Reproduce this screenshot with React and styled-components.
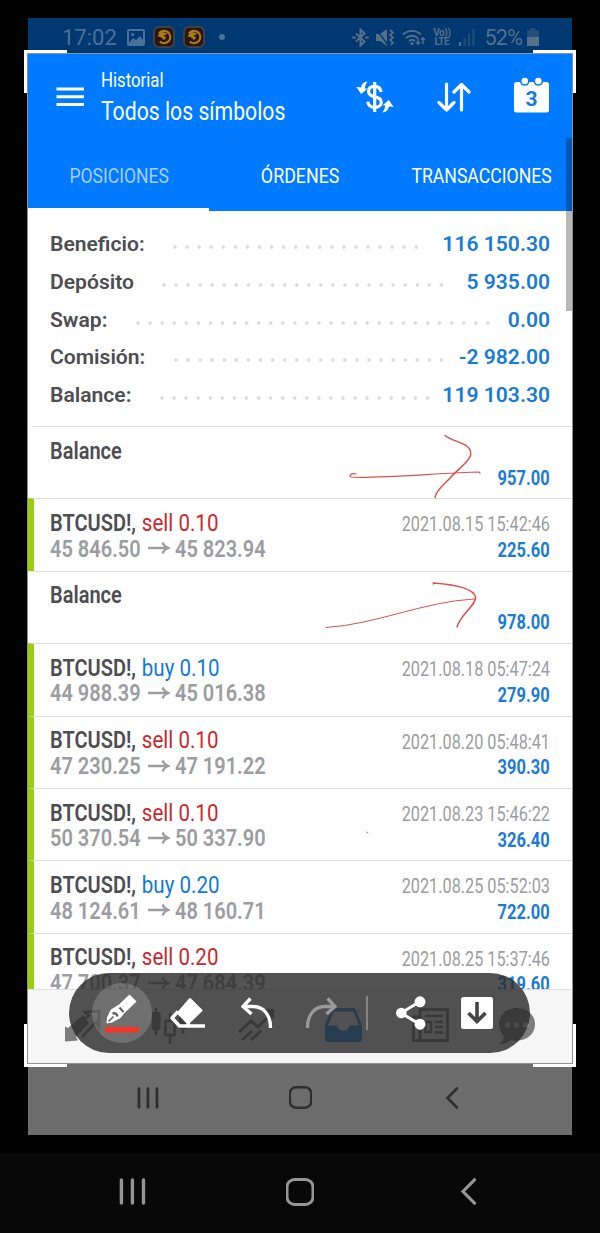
import React from 'react';
import styled, { createGlobalStyle } from 'styled-components';

const GlobalStyle = createGlobalStyle`
  * {
    box-sizing: border-box;
  }
  body {
    margin: 0;
    background: #020202;
    font-family: Roboto, "Liberation Sans", sans-serif;
  }
`;

const Phone = styled.div`
  width: 600px;
  height: 1233px;
  display: flex;
  flex-direction: column;
  overflow: hidden;
  background: #020202;
`;

const Shot = styled.div`
  position: relative;  /* anchors the crop frame, the ink and the toolbar */
  width: 544px;
  height: 1117px;
  margin: 18px 0 0 28px;
  display: flex;
  flex-direction: column;
`;

/* Narrow Roboto: regular glyphs squeezed horizontally from one edge */
const Narrow = styled.span`
  display: inline-block;
  white-space: nowrap;
  transform: scaleX(${(p) => p.$x || 0.87});
  transform-origin: ${(p) => p.$from || 'left'} center;
`;

const StatusBar = styled.div`
  flex: none;
  height: 36px;
  padding: 2px 33px 0 34px;
  display: flex;
  align-items: center;
  justify-content: space-between;
  background: #003872;
  color: #4c7098;
  font-size: 22px;
`;

const StatusGroup = styled.div`
  display: flex;
  align-items: center;
  gap: ${(p) => p.$gap}px;
  color: ${(p) => p.$color || 'inherit'};
`;

const Clock = styled.span`
  margin-right: 2px;
`;

const Percent = styled.span`
  font-size: 21.5px;
  letter-spacing: -0.6px;
  margin: 0 -2px 0 3px;
`;

const VoLte = styled.div`
  width: 19px;
  font-size: 10px;
  line-height: 9px;
  font-weight: 700;
  text-align: center;
  letter-spacing: -0.4px;
`;

const Header = styled.header`
  flex: none;
  height: 84px;
  display: flex;
  align-items: center;
  padding: 2px 23px 0 28px;
  background: #007aff;
  color: #fff;
  border-bottom: 1px solid #0071ee;
`;

const Titles = styled.div`
  flex: 1;
  display: flex;
  flex-direction: column;
  margin: 2px 0 0 17px;
`;

const Caption = styled.div`
  font-size: 19.5px;
  line-height: 29px;
`;

const Title = styled.div`
  font-size: 25px;
  line-height: 34px;
`;

const HeaderIcons = styled.div`
  display: flex;
  align-items: center;
  gap: 43px;
`;

const Tabs = styled.nav`
  flex: none;
  height: 73px;
  display: flex;
  background: #007aff;
`;

const Tab = styled.div`
  width: 181.3px;
  display: flex;
  align-items: center;
  justify-content: center;
  padding-top: 5px;
  font-size: 20.5px;
  color: ${(p) => (p.$active ? '#a9cdf5' : '#fff')};
  border-bottom: 3px solid ${(p) => (p.$active ? '#fff' : 'transparent')};
`;

const Summary = styled.section`
  flex: none;
  height: 215px;
  padding: 14px 22px 0 22px;
  background: #fff;
`;

const SummaryRow = styled.div`
  height: 37.7px;
  display: flex;
  align-items: center;
  font-size: 21.1px;
  font-weight: 600;
  color: #4d4e52;
`;

const Leader = styled.div`
  width: ${(p) => p.$dots * 12.07}px;
  height: 4px;
  margin: 7px 0 0 24.5px;
  background: radial-gradient(circle, #dcdcdc 1.5px, transparent 2.1px) left center / 12.07px 4px repeat-x;
`;

const SummaryValue = styled.div`
  margin-left: auto;
  color: #1a7bd6;
`;

const Deals = styled.section`
  height: 562.5px;
  flex: none;
  overflow: hidden;
  background: #fff;
`;

const DealRow = styled.div`
  height: 72.4px;
  display: flex;
  justify-content: space-between;
  padding: 11.6px 22px 0 16px;
  border-top: 1.5px solid #dfdfdf;
  border-left: 6px solid ${(p) => (p.$profit ? '#9ace0c' : '#fff')};
`;

const DealLeft = styled.div`
  font-size: 23px;
  line-height: 25.6px;
  font-weight: 600;
  color: #4d4e52;
`;

const DealTitle = styled.div`
  height: 25.6px;
`;

const Side = styled.span`
  margin-left: 1px;
  font-size: 23.6px;
  font-weight: 400;
  color: ${(p) => (p.$side === 'buy' ? '#0f7adb' : '#c9282d')};
`;

const Prices = styled.div`
  display: flex;
  align-items: center;
  color: #9c9da0;
`;

const Price = styled.div`
  width: 98px;
`;

const DealRight = styled.div`
  padding-top: 1.5px;
  text-align: right;
  font-size: 19.5px;
  line-height: 25.6px;
`;

const DealDate = styled.div`
  height: 25.6px;
  color: #9c9da0;
`;

const DealProfit = styled.div`
  font-weight: 700;
  color: #1a7bd6;
`;

const BottomBar = styled.footer`
  flex: none;
  height: 75px;
  display: flex;
  padding: 18px 12px 0;
  background: #f6f6f6;
  border-top: 1px solid #e0e0e0;
  color: #7c7c7c;
`;

const BottomItem = styled.div`
  flex: 1;
  display: flex;
  justify-content: center;
  align-items: flex-start;
`;

const NavBar = styled.div`
  flex: none;
  height: ${(p) => p.$height}px;
  padding-bottom: 3px;
  display: flex;
  justify-content: center;
  align-items: center;
  background: ${(p) => p.$bg};
  color: ${(p) => p.$color};
  margin-top: ${(p) => p.$gap || 0}px;
`;

const NavItem = styled.div`
  width: ${(p) => p.$width}px;
  display: flex;
  justify-content: center;
`;

const ScrollThumb = styled.div`
  position: absolute;
  top: 120px;
  right: 0;
  width: 6px;
  height: 173px;
  background: rgba(0, 0, 0, 0.28);
`;

const CropBorder = styled.div`
  position: absolute;
  top: 35px;
  left: -1px;
  width: 546px;
  height: 1011px;
  border: 1px solid #8f9296;
`;

const Corner = styled.div`
  position: absolute;
  width: 43px;
  height: 43px;
  border: 0 solid #fff;
  ${(p) => (p.$v === 'top' ? 'top: 32px; border-top-width: 3px;' : 'top: 1006px; border-bottom-width: 3px;')}
  ${(p) => (p.$h === 'left' ? 'left: -4px; border-left-width: 3px;' : 'right: -4px; border-right-width: 3px;')}
`;

const Ink = styled.svg`
  position: absolute;
  left: 272px;
  top: 402px;
`;

const Toolbar = styled.div`
  position: absolute;
  left: 41px;
  top: 955px;
  width: 461px;
  height: 80px;
  padding-left: 23px;
  display: flex;
  align-items: center;
  border-radius: 40px;
  background: rgba(40, 40, 40, 0.8);
  color: #fff;
`;

const Tool = styled.div`
  width: 60px;
  height: 60px;
  margin-left: ${(p) => p.$gap || 0}px;
  display: flex;
  align-items: center;
  justify-content: center;
  border-radius: 50%;
  background: ${(p) => (p.$active ? 'rgba(255, 255, 255, 0.18)' : 'transparent')};
  color: ${(p) => (p.$disabled ? '#9a9a9a' : '#fff')};
`;

const Divider = styled.div`
  width: 2px;
  height: 34px;
  margin-left: 15px;
  background: #858585;
`;

const summary = [
  { label: 'Beneficio:', value: '116 150.30', dots: 21 },
  { label: 'Depósito', value: '5 935.00', dots: 24 },
  { label: 'Swap:', value: '0.00', dots: 30 },
  { label: 'Comisión:', value: '-2 982.00', dots: 23 },
  { label: 'Balance:', value: '119 103.30', dots: 23 },
];

const deals = [
  { profit: '957.00' },
  { side: 'sell', lot: '0.10', open: '45 846.50', close: '45 823.94', date: '2021.08.15 15:42:46', profit: '225.60' },
  { profit: '978.00' },
  { side: 'buy', lot: '0.10', open: '44 988.39', close: '45 016.38', date: '2021.08.18 05:47:24', profit: '279.90' },
  { side: 'sell', lot: '0.10', open: '47 230.25', close: '47 191.22', date: '2021.08.20 05:48:41', profit: '390.30' },
  { side: 'sell', lot: '0.10', open: '50 370.54', close: '50 337.90', date: '2021.08.23 15:46:22', profit: '326.40' },
  { side: 'buy', lot: '0.20', open: '48 124.61', close: '48 160.71', date: '2021.08.25 05:52:03', profit: '722.00' },
  { side: 'sell', lot: '0.20', open: '47 700.37', close: '47 684.39', date: '2021.08.25 15:37:46', profit: '319.60' },
];

const PictureIcon = () => (
  <svg width="18" height="17" viewBox="0 0 18 17" fill="none" stroke="currentColor" strokeWidth="2">
    <rect x="1" y="1" width="16" height="15" rx="1" />
    <path d="M2 14l4-5 3 2 4-4 4 5v3H2z" fill="currentColor" stroke="none" />
    <circle cx="5.5" cy="5.5" r="1.6" fill="currentColor" stroke="none" />
  </svg>
);

const CoinIcon = () => (
  <svg width="22" height="22" viewBox="0 0 22 22" fill="none">
    <rect x="1" y="1" width="20" height="20" rx="5" fill="#2b1414" stroke="#4d4a42" strokeWidth="1.5" />
    <path d="M6 7.500a6.200 6.200 0 1 1 .8 8" stroke="#a87c18" strokeWidth="2.200" />
    <path d="M4.500 10.500c2-5 6-5.500 10-2.500-1 1-3 0-4 2 3 0 3 3 0 4-1-2-3-3.500-6-3.500z" fill="#a87c18" />
  </svg>
);

const BluetoothIcon = () => (
  <svg width="17" height="19" viewBox="0 0 17 19" fill="none" stroke="currentColor" strokeWidth="2">
    <path d="M4 5.5l8.500 8-4 4v-16l4 4-8.500 8" />
    <path d="M1 9.500h2M14 9.500h2" strokeLinecap="round" />
  </svg>
);

const MuteIcon = () => (
  <svg width="20" height="19" viewBox="0 0 20 19" fill="none" stroke="currentColor" strokeWidth="2">
    <path d="M1 6h4l7-5v17l-7-5H1z" fill="currentColor" stroke="none" />
    <path d="M1 1l12 16" stroke="#003872" strokeWidth="1.4" />
    <path d="M15 2l3 2.500-3 2.500 3 2.500-3 2.500 3 2.500-2 2.500" strokeWidth="1.7" />
  </svg>
);

const WifiIcon = () => (
  <svg width="24" height="18" viewBox="0 0 24 18" fill="none" stroke="currentColor" strokeWidth="1.9">
    <path d="M1 6.500a13 13 0 0 1 18 0M4 10a9 9 0 0 1 12 0M7 13a5 5 0 0 1 6 0" />
    <circle cx="10" cy="15.500" r="1.600" fill="currentColor" stroke="none" />
    <path d="M16 10v6m-2-2l2 2.200 2-2.200M21 16v-6m-2 2l2-2.200 2 2.200" strokeWidth="1.400" />
  </svg>
);

const SignalIcon = () => (
  <svg width="17" height="18" viewBox="0 0 17 18" stroke="currentColor" strokeWidth="2.200">
    <path d="M2 18v-4" />
    <path d="M6.500 18v-8M11 18V6M15.500 18V1" opacity="0.4" />
  </svg>
);

const BatteryIcon = () => (
  <svg width="12" height="18" viewBox="0 0 12 18" fill="currentColor">
    <path d="M3.500 0h5v2H12v7H0V2h3.500z" opacity="0.4" />
    <path d="M0 9h12v9H0z" />
  </svg>
);

const MenuIcon = () => (
  <svg width="28" height="20" viewBox="0 0 28 20" stroke="#fff" strokeWidth="3">
    <path d="M0.500 2h27.500M0.500 9.800h27.500M0.500 17.500h27.500" />
  </svg>
);

const CurrencyIcon = () => (
  <svg width="38" height="34" viewBox="0 0 38 34" fill="none" stroke="#fff" strokeWidth="3.200">
    <path d="M18.700 2v30" />
    <path d="M25 12c-.5-4-3-5.600-6.300-5.600-4 0-6.200 1.800-6.200 5 0 7.500 12.800 3.200 12.800 10.800 0 3.400-2.800 5.200-6.600 5.200-3.800 0-6.300-1.800-7-5.600" />
    <path d="M11.500 1.500c-4 .8-6 2.500-6.300 6L.3 7l4.900 7 6-5.200-2.400-.3c.2-2.500 1-4.500 2.700-7z" fill="#fff" stroke="none" />
    <path d="M26.500 32.500c4-.8 6-2.500 6.300-6l4.900.5-4.900-7-6 5.200 2.400.3c-.2 2.500-1 4.500-2.700 7z" fill="#fff" stroke="none" />
  </svg>
);

const SortIcon = () => (
  <svg width="34" height="30" viewBox="0 0 34 30" fill="none" stroke="#fff" strokeWidth="3.200" strokeLinecap="round" strokeLinejoin="round">
    <path d="M9.500 2v26M2 20.500l7.500 7.500 7.500-7.500" />
    <path d="M24.500 28V2.500M17 10l7.500-7.500L32 10" />
  </svg>
);

const CalendarBox = styled.div`
  position: relative;
  width: 35px;
  height: 36px;
  margin-bottom: 3px;
`;

const CalendarDay = styled.div`
  position: absolute;  /* number printed over the calendar sheet */
  left: 0;
  right: 0;
  top: 11px;
  text-align: center;
  color: #0f78e8;
  font-size: 21px;
  line-height: 22px;
  font-weight: 700;
`;

const CalendarIcon = () => (
  <CalendarBox>
    <svg width="35" height="36" viewBox="0 0 35 36">
      <rect x="0" y="5" width="35" height="30.500" rx="2.500" fill="#fff" />
      <circle cx="10.800" cy="4" r="4.800" fill="#007aff" />
      <circle cx="24.300" cy="4" r="4.800" fill="#007aff" />
      <circle cx="10.800" cy="4" r="3.200" fill="#fff" />
      <circle cx="24.300" cy="4" r="3.200" fill="#fff" />
    </svg>
    <CalendarDay>3</CalendarDay>
  </CalendarBox>
);

const ArrowIcon = () => (
  <svg width="22" height="14" viewBox="0 0 22 14" fill="none" stroke="#9c9da0" strokeWidth="2.300">
    <path d="M0 6h20.500M14.500 0.500q1.500 4 6 5.500-4.500 1.500-6 5.500" />
  </svg>
);

const QuotesIcon = () => (
  <svg width="36" height="34" viewBox="0 0 36 34" fill="none" stroke="currentColor" strokeWidth="2.500">
    <path d="M0 18.500l3 1.500 15-13 6 8-13 14 2 3.500-13 1z" fill="currentColor" stroke="none" />
    <path d="M17 29L31 14l3 5V3L20 4l4 3.500-6 5" />
  </svg>
);

const ChartIcon = () => (
  <svg width="36" height="38" viewBox="0 0 36 38" fill="none" stroke="currentColor" strokeWidth="2.600">
    <path d="M4 0v27M18 5v7M18 28v8M31 4v22" />
    <rect x="0" y="4" width="8.500" height="18" rx="1" fill="currentColor" stroke="none" />
    <rect x="13.500" y="13" width="9" height="14" />
    <rect x="27" y="9" width="8" height="12" fill="currentColor" stroke="none" />
  </svg>
);

const TradeIcon = () => (
  <svg width="37" height="34" viewBox="0 0 37 34" fill="none" stroke="currentColor" strokeWidth="3">
    <path d="M1 24l12-11 7 6L33 6" />
    <path d="M24 1h12v11z" fill="currentColor" stroke="none" />
    <path d="M4 32l10-9M13 32l10-9" />
  </svg>
);

const InboxIcon = () => (
  <svg width="37" height="34" viewBox="0 0 37 34" fill="#2a8cf0">
    <path d="M7 0h23l7 17v14a3 3 0 0 1-3 3H3a3 3 0 0 1-3-3V17z" />
    <path d="M8.500 3.500h20L34 17.500h-9.500c-1 7-11.500 7-12.500 0H3z" fill="#f6f6f6" />
  </svg>
);

const NewsIcon = () => (
  <svg width="37" height="34" viewBox="0 0 37 34" fill="none" stroke="currentColor" strokeWidth="3">
    <path d="M8 1.500h27.500v31H1.500V9H8z" />
    <path d="M8 9v23" />
    <path d="M13 8h18M23 14h8M23 19h8M23 24.500h8" strokeWidth="2.400" />
    <rect x="13.500" y="14" width="5.500" height="10" strokeWidth="2.600" />
  </svg>
);

const ChatIcon = () => (
  <svg width="37" height="37" viewBox="0 0 37 37">
    <path d="M18.500 0C8 0 1 7 1 16c0 5 2 9 5 12 0 3-2 6-5 8 5 0 9-1 12-4 14 3 24-5 24-16C37 7 29 0 18.500 0z" fill="currentColor" />
    <circle cx="9.500" cy="17" r="2.800" fill="#ddd" />
    <circle cx="18.500" cy="17" r="2.800" fill="#ddd" />
    <circle cx="27.500" cy="17" r="2.800" fill="#ddd" />
  </svg>
);

const PenIcon = () => (
  <svg width="36" height="40" viewBox="0 0 36 40">
    <path d="M25.500 2l6.500 6.500L19 21l-6-7z" fill="#fff" stroke="#fff" strokeLinejoin="round" />
    <path d="M15 12l6 6.500-4.500 6L8 29l-5 1 .5-5.500L7 17z" fill="#fff" stroke="#fff" strokeLinejoin="round" />
    <path d="M4.500 28.500l5-5" stroke="#666" strokeWidth="1.600" />
    <path d="M8.500 20.500q4-1 5 3" stroke="#666" strokeWidth="2.400" fill="none" />
    <path d="M15.500 14.500l4 4.500" stroke="#666" strokeWidth="2.200" />
    <rect x="1" y="34" width="34" height="5.500" rx="0.500" fill="#f23525" />
  </svg>
);

const EraserIcon = () => (
  <svg width="36" height="32" viewBox="0 0 36 32" fill="none" stroke="#fff" strokeLinejoin="round">
    <path d="M20 2l11.500 11.500L18 26.500 8 16z" fill="#fff" strokeWidth="2" />
    <path d="M8 14.500l-6 6.500 7.500 8h7l3-3M9.500 29H35" strokeWidth="3.400" />
  </svg>
);

const UndoIcon = () => (
  <svg width="32" height="32" viewBox="0 0 32 32" fill="none" stroke="currentColor" strokeWidth="3.400">
    <path d="M9.500 1.500l-7.500 8 8.500 7.500" />
    <path d="M3 9.500h9C22 9.500 29.500 17 29.500 31" />
  </svg>
);

const RedoIcon = () => (
  <svg width="32" height="32" viewBox="0 0 32 32" fill="none" stroke="currentColor" strokeWidth="3.400">
    <path d="M22.500 1.500l7.500 8-8.500 7.500" />
    <path d="M29 9.500h-9C10 9.500 2.500 17 2.500 31" />
  </svg>
);

const ShareIcon = () => (
  <svg width="30" height="34" viewBox="0 0 30 34" fill="currentColor" stroke="currentColor">
    <path d="M5 17L24 5.500M5 17l19 11.500" strokeWidth="3" />
    <circle cx="5.300" cy="17" r="5.300" stroke="none" />
    <circle cx="24" cy="5.800" r="5.500" stroke="none" />
    <circle cx="24" cy="28.200" r="5.500" stroke="none" />
  </svg>
);

const SaveIcon = () => (
  <svg width="32" height="32" viewBox="0 0 32 32" fill="none">
    <rect width="32" height="32" rx="2.500" fill="#fff" />
    <path d="M16 5v19M7.500 16l8.500 8.500 8.500-8.500" stroke="#444" strokeWidth="3.600" />
  </svg>
);

const RecentsIcon = ({ size }) => (
  <svg width={size} height={size} viewBox="0 0 27 27" stroke="currentColor" strokeWidth="3.400" strokeLinecap="round">
    <path d="M2.400 2v23M13.400 2v23M24.500 2v23" />
  </svg>
);

const HomeIcon = ({ size }) => (
  <svg width={size} height={size} viewBox="0 0 28 28" fill="none" stroke="currentColor" strokeWidth="3">
    <rect x="1" y="1.600" width="26" height="24.800" rx="7.500" />
  </svg>
);

const BackIcon = ({ size }) => (
  <svg width={size} height={size} viewBox="0 0 27 27" fill="none" stroke="currentColor" strokeWidth="3.200" strokeLinecap="round">
    <path d="M19.500 1.800L8 13.500l11.500 11.700" />
  </svg>
);

const Navigation = ({ item, size, ...bar }) => (
  <NavBar {...bar}>
    <NavItem $width={item}><RecentsIcon size={size} /></NavItem>
    <NavItem $width={item}><HomeIcon size={size + 1} /></NavItem>
    <NavItem $width={item}><BackIcon size={size} /></NavItem>
  </NavBar>
);

const Deal = ({ side, lot, open, close, date, profit }) => (
  <DealRow $profit={Boolean(side)}>
    <DealLeft>
      <DealTitle>
        <Narrow>
          {side ? <>BTCUSD!, <Side $side={side}>{side} {lot}</Side></> : 'Balance'}
        </Narrow>
      </DealTitle>
      {side && (
        <Prices>
          <Price><Narrow>{open}</Narrow></Price>
          <ArrowIcon />
          <Price><Narrow>&nbsp;{close}</Narrow></Price>
        </Prices>
      )}
    </DealLeft>
    <DealRight>
      <DealDate>{date && <Narrow $from="right" $x={0.833}>{date}</Narrow>}</DealDate>
      <DealProfit><Narrow $from="right" $x={0.845}>{profit}</Narrow></DealProfit>
    </DealRight>
  </DealRow>
);

const App = () => (
  <>
    <GlobalStyle />
    <Phone>
      <Shot>
        <StatusBar>
          <StatusGroup $gap={8}>
            <Clock>17:02</Clock>
            <PictureIcon />
            <CoinIcon />
            <CoinIcon />
            <svg width="16" height="8" viewBox="0 0 16 8"><circle cx="9" cy="4" r="3" fill="currentColor" /></svg>
          </StatusGroup>
          <StatusGroup $gap={6.5} $color="#567089">
            <BluetoothIcon />
            <MuteIcon />
            <WifiIcon />
            <VoLte>Vo)) LTE</VoLte>
            <SignalIcon />
            <Percent>52%</Percent>
            <BatteryIcon />
          </StatusGroup>
        </StatusBar>

        <Header>
          <MenuIcon />
          <Titles>
            <Caption><Narrow $x={0.86}>Historial</Narrow></Caption>
            <Title><Narrow $x={0.848}>Todos los símbolos</Narrow></Title>
          </Titles>
          <HeaderIcons>
            <CurrencyIcon />
            <SortIcon />
            <CalendarIcon />
          </HeaderIcons>
        </Header>

        <Tabs>
          <Tab $active><Narrow $from="center" $x={0.855}>POSICIONES</Narrow></Tab>
          <Tab><Narrow $from="center">ÓRDENES</Narrow></Tab>
          <Tab><Narrow $from="center" $x={0.86}>TRANSACCIONES</Narrow></Tab>
        </Tabs>

        <Summary>
          {summary.map((row) => (
            <SummaryRow key={row.label}>
              {row.label}
              <Leader $dots={row.dots} />
              <SummaryValue>{row.value}</SummaryValue>
            </SummaryRow>
          ))}
        </Summary>

        <Deals>
          {deals.map((deal) => <Deal key={deal.profit} {...deal} />)}
        </Deals>

        <BottomBar>
          <BottomItem><QuotesIcon /></BottomItem>
          <BottomItem><ChartIcon /></BottomItem>
          <BottomItem><TradeIcon /></BottomItem>
          <BottomItem><InboxIcon /></BottomItem>
          <BottomItem><NewsIcon /></BottomItem>
          <BottomItem><ChatIcon /></BottomItem>
        </BottomBar>

        <Navigation item={152} size={22} $height={71} $bg="#6c6c6c" $color="#2e2e2e" />

        <ScrollThumb />
        <CropBorder />
        <Corner $v="top" $h="left" />
        <Corner $v="top" $h="right" />
        <Corner $v="bottom" $h="left" />
        <Corner $v="bottom" $h="right" />

        {/* hand-drawn marks */}
        <Ink width="200" height="430" viewBox="300 420 200 430" fill="none" stroke="#d9534b" strokeLinecap="round">
          <path d="M356 474c-4-1-8 1-5 3 20 2 90-4 128-5l1 1" strokeWidth="1.200" />
          <path d="M445 435.500c8 7 28 7 25.500 20-3 8-12 13-20 22-7 8-14 12-15.500 20" strokeWidth="1.500" />
          <path d="M326 627.500c50-3 98-26 148-28.500" strokeWidth="1" />
          <path d="M433.500 584v-1c13 1 40 4 42 14 1 8-15 17-18.500 30" strokeWidth="1.500" />
          <path d="M366.500 832l1.500 1" stroke="#888" />
        </Ink>

        <Toolbar>
          <Tool $active><PenIcon /></Tool>
          <Tool $gap={6}><EraserIcon /></Tool>
          <Tool $gap={9}><UndoIcon /></Tool>
          <Tool $gap={4} $disabled><RedoIcon /></Tool>
          <Divider />
          <Tool $gap={13}><ShareIcon /></Tool>
          <Tool $gap={6}><SaveIcon /></Tool>
        </Toolbar>
      </Shot>
      <Navigation item={168} size={27} $height={80} $gap={18} $bg="#080808" $color="#959595" />
    </Phone>
  </>
);

export default App;
